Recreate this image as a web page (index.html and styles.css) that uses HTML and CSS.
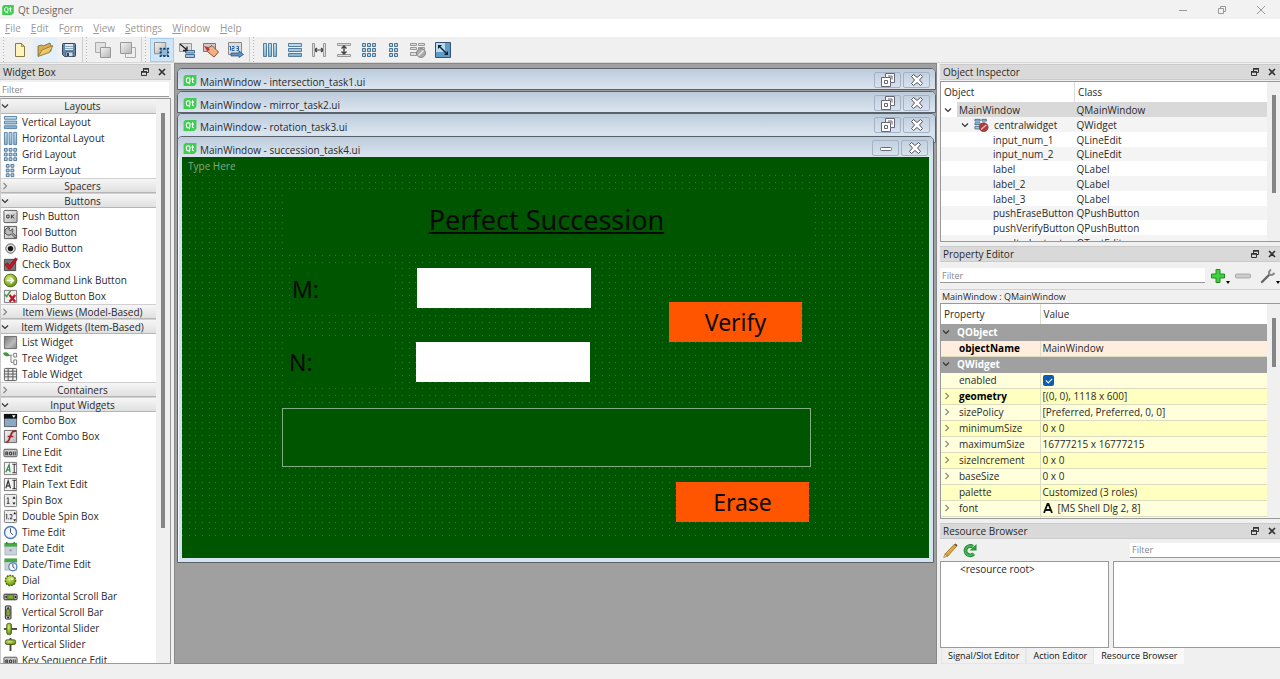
FILE: index.html
```
<!DOCTYPE html>
<html lang="en">
<head>
<meta charset="utf-8">
<title>Qt Designer</title>
<link rel="stylesheet" href="styles.css">
</head>
<body>
<svg class="sprite" aria-hidden="true">
  <defs>
    <linearGradient id="gBlue" x1="0" y1="0" x2="0" y2="1"><stop offset="0" stop-color="#c3dff0"/><stop offset="1" stop-color="#7fb2d3"/></linearGradient>
    <linearGradient id="gGrey" x1="0" y1="0" x2="1" y2="1"><stop offset="0" stop-color="#f4f4f4"/><stop offset="1" stop-color="#b4b4b4"/></linearGradient>
    <linearGradient id="gDark" x1="0" y1="0" x2="1" y2="1"><stop offset="0" stop-color="#777"/><stop offset=".6" stop-color="#bbb"/><stop offset="1" stop-color="#888"/></linearGradient>
    <radialGradient id="gLime" cx=".4" cy=".35" r=".7"><stop offset="0" stop-color="#d9f06a"/><stop offset="1" stop-color="#5c8a10"/></radialGradient>
    <linearGradient id="gGold" x1="0" y1="0" x2="1" y2="1"><stop offset="0" stop-color="#fbe9a0"/><stop offset="1" stop-color="#d9a93a"/></linearGradient>
    <pattern id="dots" width="20" height="20" patternUnits="userSpaceOnUse">
      <path fill="#2f7d2f" d="M0 0h1v1h-1zM7 0h1v1h-1zM13 0h1v1h-1zM0 7h1v1h-1zM7 7h1v1h-1zM13 7h1v1h-1zM0 13h1v1h-1zM7 13h1v1h-1zM13 13h1v1h-1z"/>
    </pattern>
  </defs>
  <symbol id="qt" viewBox="0 0 14 12"><path fill="#41cd52" d="M2 0h12v9.500l-2.500 2.500H0V2z"/><path fill="none" stroke="#fff" stroke-width="1.200" d="M5 3c-2 0-2 1-2 2.700S3 8.500 5 8.500s2-1 2-2.800S7 3 5 3zM5.500 8l1.200 2M9.800 2.500v5q0 1 1.400 1M8.600 4.500h2.700"/></symbol>
  <symbol id="float" viewBox="0 0 8 8"><path fill="none" stroke="#333" d="M2.500 3V.5h5v4H6M.5 3.500h5v4h-5z"/><path stroke="#333" stroke-width="1.500" d="M2 1h6M0 4h6"/></symbol>
  <symbol id="close" viewBox="0 0 8 8"><path stroke="#333" stroke-width="1.700" d="M1 1l6 6M7 1L1 7"/></symbol>
  <symbol id="down" viewBox="0 0 8 8"><path fill="none" stroke="#333" stroke-width="1.200" d="M1 2.500l3 3 3-3"/></symbol>
  <symbol id="right" viewBox="0 0 8 8"><path fill="none" stroke="#888" stroke-width="1.200" d="M2.500 1l3 3-3 3"/></symbol>
  <symbol id="new" viewBox="0 0 16 16"><path fill="#fdf3bd" stroke="#8a7a3d" d="M3.500 1.500h6l3 3v10h-9z"/><path fill="#e0c86a" stroke="#8a7a3d" stroke-width=".7" d="M9.500 1.500v3h3z"/></symbol>
  <symbol id="open" viewBox="0 0 16 16"><path fill="#d8ad4f" stroke="#7a6232" stroke-width=".8" d="M1 14V4l4-1 1 1 7-3 1 3v5z"/><path fill="url(#gGold)" stroke="#8a6d2c" stroke-width=".8" d="M1 14.500L5 8l11-4.500-3.500 7z"/></symbol>
  <symbol id="save" viewBox="0 0 16 16"><path fill="#6387ab" stroke="#32465c" d="M1.500 2.500q0-1 1-1h11q1 0 1 1v11q0 1-1 1h-10l-2-2z"/><path fill="#dfe8f1" d="M4 2h8v6H4z"/><path fill="#8ea8c0" d="M4 4h8v1H4zM4 6h8v1H4z"/><path fill="#d6dde4" stroke="#32465c" stroke-width=".7" d="M5 10h7v4.500H5z"/><path fill="#32465c" d="M6 11h2v3H6z"/></symbol>
  <symbol id="back" viewBox="0 0 16 16"><path fill="#e2e2e2" stroke="#aaa" d="M.5.5h10v10H.5z"/><path fill="url(#gGrey)" stroke="#999" d="M5.500 5.500h10v10h-10z"/></symbol>
  <symbol id="front" viewBox="0 0 16 16"><path fill="#eee" stroke="#aaa" d="M5.500 5.500h10v10h-10z"/><path fill="url(#gGrey)" stroke="#999" d="M.5.500h11v11H.5z"/></symbol>
  <symbol id="edit" viewBox="0 0 17 17"><path fill="url(#gGrey)" stroke="#888" d="M.5.500h12v12H.5z"/><path fill="#92b8d8" d="M7 7h8v8H7z"/><path fill="none" stroke="#1d4b7d" stroke-dasharray="1 1" d="M7.500 7.500h7v7h-7z"/><path fill="#12365f" d="M6 6h2v2H6zM14 6h2v2h-2zM6 14h2v2H6zM14 14h2v2h-2zM10 6h2v2h-2zM10 14h2v2h-2zM6 10h2v2H6zM14 10h2v2h-2z"/></symbol>
  <symbol id="signal" viewBox="0 0 16 16"><path fill="#ddd" stroke="#999" d="M.5 1.500h12v8H.5z"/><path fill="#a5c5e3" stroke="#456b93" d="M6.500 8.500h9v2.500h-9zM6.500 12.500h9v3h-9z"/><path stroke="#222" stroke-width="1.300" fill="none" d="M1 2l7 6M8 4.500V8.500H4"/></symbol>
  <symbol id="buddy" viewBox="0 0 16 16"><path fill="#ccc" stroke="#777" d="M.5 1.500h12v8H.5z"/><path fill="#f0b287" stroke="#8d4d2c" d="M5 6l4-2.500 6.500 6.500-4.500 5-6.500-5.500z"/><path fill="#c33" d="M1 4l4 1 2 3-3 1z"/></symbol>
  <symbol id="tab" viewBox="0 0 16 16"><path fill="#ddd" stroke="#888" d="M.5.500h13v12H.5z"/><path fill="none" stroke="#2b64a5" d="M1.500 5l1-1v4.500M4 4.500h2v2h-2v2h2.500M8.500 4.500h2v4h-2M8.500 6.500h2"/><path fill="#5c91ca" stroke="#1d4b7d" stroke-width=".7" d="M3 11h8V9l4.500 3.500-4.500 3V14H3z"/></symbol>
  <symbol id="lh" viewBox="0 0 16 16"><path fill="url(#gBlue)" stroke="#567f9f" d="M1.500 1.500h3v13h-3zM6.500 1.500h3v13h-3zM11.500 1.500h3v13h-3z"/></symbol>
  <symbol id="lv" viewBox="0 0 16 16"><path fill="url(#gBlue)" stroke="#567f9f" d="M1.500 1.500h13v3h-13zM1.500 6.500h13v3h-13zM1.500 11.500h13v3h-13z"/></symbol>
  <symbol id="sh" viewBox="0 0 16 16"><path fill="#ddd" stroke="#999" d="M1.500 1.500h2v5H5v3H3.500v5h-2zM14.500 1.500h-2v5H11v3h1.500v5h2z"/><path stroke="#444" stroke-width="1.200" fill="none" d="M4 8h8M6 6L4 8l2 2M10 6l2 2-2 2"/></symbol>
  <symbol id="sv" viewBox="0 0 16 16"><path fill="#ddd" stroke="#999" d="M1.500 1.500h13v2h-13zM1.500 12.500h13v2h-13z"/><path stroke="#444" stroke-width="1.400" fill="none" d="M8 4v8M5.500 6.500L8 4l2.500 2.500M5.500 9.500L8 12l2.500-2.500"/></symbol>
  <symbol id="grid" viewBox="0 0 16 16"><path fill="#b4d6ec" stroke="#4b7294" d="M1.500 1.500h3v3h-3zM6.500 1.500h3v3h-3zM11.500 1.500h3v3h-3zM1.500 6.500h3v3h-3zM6.500 6.500h3v3h-3zM11.500 6.500h3v3h-3zM1.500 11.500h3v3h-3zM6.500 11.500h3v3h-3zM11.500 11.500h3v3h-3z"/></symbol>
  <symbol id="form" viewBox="0 0 16 16"><path fill="#b4d6ec" stroke="#4b7294" d="M3.500 1.500h3v3h-3zM8.500 1.500h3v3h-3zM3.500 6.500h3v3h-3zM8.500 6.500h3v3h-3zM3.500 11.500h3v3h-3zM8.500 11.500h3v3h-3z"/></symbol>
  <symbol id="break" viewBox="0 0 16 16"><path fill="#ddd" stroke="#999" d="M.5 1.500h6v2h-6zM8.500 1.500h6v2h-6zM.5 5.500h6v2h-6zM8.500 5.500h6v2h-6zM.5 10.500h6v3h-6z"/><circle cx="11" cy="11" r="4.500" fill="#aaa" stroke="#888"/><path stroke="#eee" stroke-width="1.500" d="M8.500 13.500l5-5"/></symbol>
  <symbol id="breakred" viewBox="0 0 16 16"><path fill="#a9cde6" stroke="#41688b" d="M.5 1.500h6v2h-6zM8.500 1.500h5v2h-5zM.5 5.500h6v2h-6zM.5 9.500h6v3h-6z"/><circle cx="10.500" cy="10.500" r="5" fill="#b23a3a" stroke="#7f4040"/><path stroke="#e6b5b5" stroke-width="1.500" d="M7.500 13l6-5"/></symbol>
  <symbol id="adjust" viewBox="0 0 16 16"><path fill="#5f9cc8" stroke="#35536e" d="M.5.500h15v15H.5z"/><path fill="#b9dcf0" d="M1 1h9v9H1z"/><path stroke="#123" stroke-width="1.400" d="M4 4l7 7"/><path fill="#123" d="M3 3h4L3 7zM13 13H9l4-4z"/></symbol>
  <symbol id="push" viewBox="0 0 16 16"><rect x="1" y="1.500" width="14" height="13" rx="1" fill="url(#gGrey)" stroke="#555"/><path fill="none" stroke="#333" d="M4 6.500h2.500v3H4zM9 6v4M12 6L9.500 8 12 10"/></symbol>
  <symbol id="tool" viewBox="0 0 16 16"><path fill="url(#gGrey)" stroke="#555" d="M1.500 1.500h13v13h-13z"/><path fill="#bbb" stroke="#444" d="M7 3a4 4 0 1 0 2 6.500l4 4.500 1.500-1.500L10 8a4 4 0 0 0 0-4L8 6.500 6.500 5z"/></symbol>
  <symbol id="radio" viewBox="0 0 16 16"><circle cx="8" cy="8" r="5" fill="#ddd" stroke="#555"/><circle cx="8" cy="8" r="2.800" fill="#111"/></symbol>
  <symbol id="check" viewBox="0 0 16 16"><path fill="#777" stroke="#444" d="M1.500 2.500h12v12h-12z"/><path fill="#c5152b" stroke="#7d0c18" stroke-width=".6" d="M2 8l3-2 2 3 6-8 2.500 1L8 13H6z"/></symbol>
  <symbol id="command" viewBox="0 0 16 16"><circle cx="8" cy="8" r="6.800" fill="url(#gLime)" stroke="#4e6b10"/><path fill="none" stroke="#fff" stroke-width="1.600" d="M4 8h7M8 5l3 3-3 3"/></symbol>
  <symbol id="dialog" viewBox="0 0 16 16"><path fill="#eee" stroke="#777" d="M1.500 1.500h13v13h-13z"/><path fill="none" stroke="#41a53a" stroke-width="1.800" d="M2 6l2 2 4-6"/><path stroke="#c8142a" stroke-width="2.500" d="M7 6.500l6 7M13 6.500l-6 7"/></symbol>
  <symbol id="list" viewBox="0 0 16 16"><path fill="url(#gDark)" stroke="#666" d="M1.500 1.500h13v13h-13z"/></symbol>
  <symbol id="tree" viewBox="0 0 16 16"><path fill="#3f9a35" d="M0 2q5-2 7 3Q2 7 0 2z"/><path fill="none" stroke="#777" d="M6 4.500h4M8.500 5v7H11M11.500 2.500h3v4h-3zM11.500 9.500h3v5h-3z"/></symbol>
  <symbol id="table" viewBox="0 0 16 16"><rect x="1.500" y="1.500" width="13" height="13" rx="1" fill="#eee" stroke="#555"/><path stroke="#555" d="M2 4.500h12M2 7.500h12M2 10.500h12M5.500 2v12M10.500 2v12"/></symbol>
  <symbol id="combo" viewBox="0 0 16 16"><path fill="#89a9c6" stroke="#555" d="M1.500 1.500h13v13h-13z"/><path fill="#111" d="M1 1h14v5H1z"/><path fill="#fff" d="M9.500 2.500h4L11.500 5z"/></symbol>
  <symbol id="fontcombo" viewBox="0 0 16 16"><path fill="url(#gGrey)" stroke="#666" d="M1.500 1.500h13v13h-13z"/><path fill="none" stroke="#a3202c" stroke-width="1.800" d="M3 14q3 0 4-4l2-5q1-3 5-3M5 8h6"/></symbol>
  <symbol id="line" viewBox="0 0 16 16"><rect x="1" y="4.500" width="14" height="8" rx="1" fill="#ccc" stroke="#555"/><path fill="none" stroke="#333" d="M3 11V7.500h2V11M3 9.500h2M7 7.500h2v3H7zM11 7v4M13 7v4"/></symbol>
  <symbol id="text" viewBox="0 0 16 16"><path fill="#f3f3f3" stroke="#777" d="M1.500 1.500h13v13h-13z"/><path fill="none" stroke="#2f8a4a" stroke-width="1.300" d="M3 12l3.500-8 1 8M4 9.500h3.500"/><path stroke="#333" d="M10 3.500h4M12 3.500v9M10 12.500h4"/></symbol>
  <symbol id="plain" viewBox="0 0 16 16"><path fill="#f3f3f3" stroke="#777" d="M1.500 1.500h13v13h-13z"/><path fill="none" stroke="#333" stroke-width="1.200" d="M3 12l2.500-8L8 12M4 9.500h3.500M10 3.500h4M12 3.500v9M10 12.500h4"/></symbol>
  <symbol id="spin" viewBox="0 0 16 16"><rect x="1.500" y="1.500" width="13" height="13" rx="1" fill="#eee" stroke="#777"/><path fill="none" stroke="#333" d="M4 6l1.500-1v6M4 11h3"/><path fill="#222" d="M10 6l1.700-2.500L13.500 6zM10 10h3.500l-1.800 2.500z"/></symbol>
  <symbol id="dspin" viewBox="0 0 16 16"><rect x="1.500" y="1.500" width="13" height="13" rx="1" fill="#eee" stroke="#777"/><path fill="none" stroke="#333" d="M3 6l1-.5V11M5.500 10.500h1M7 6h2.500v2L7.500 10.500H10"/><path fill="#222" d="M11 5.500L12.500 3 14 5.500zM11 11h3l-1.500 2.500z"/></symbol>
  <symbol id="time" viewBox="0 0 16 16"><circle cx="8" cy="8" r="6.400" fill="#f4f8fd" stroke="#4a7ab5" stroke-width="1.500"/><path fill="none" stroke="#345" d="M8 3.500V8l2.500 2.500"/></symbol>
  <symbol id="date" viewBox="0 0 16 16"><path fill="#c9d2da" stroke="#9aa" stroke-width=".7" d="M2 4h12.500v11H2z"/><path fill="#45a845" d="M1.500 2h13.500v4H1.500z"/><path stroke="#2a7b2a" stroke-width="1.500" d="M4 1v2M12 1v2"/><path fill="#7890ad" d="M7 9h2v2H7z"/></symbol>
  <symbol id="datetime" viewBox="0 0 16 16"><path fill="#c9d2da" stroke="#9aa" stroke-width=".7" d="M2 4h12.500v10H2z"/><path fill="#45a845" d="M1.500 1.500h13.500v4H1.500z"/><circle cx="10.500" cy="10.500" r="4.300" fill="#f4f8fd" stroke="#4a7ab5" stroke-width="1.200"/><path fill="none" stroke="#345" d="M10.500 7.500v3l2 1.500"/></symbol>
  <symbol id="dial" viewBox="0 0 16 16"><circle cx="8" cy="8" r="5.500" fill="url(#gLime)" stroke="#4e6b10" stroke-dasharray="2 1" stroke-width="1.500"/><circle cx="10" cy="6" r="1.300" fill="#f3ffb0"/></symbol>
  <symbol id="hscroll" viewBox="0 0 16 16"><rect x="1" y="5.500" width="14" height="6" rx="1" fill="#bbb" stroke="#222"/><path fill="#7fae22" stroke="#333" stroke-width=".6" d="M5 6h6.500v5H5z"/><path fill="#111" d="M4 7v3L2 8.500zM12.500 7v3l2-1.500z"/></symbol>
  <symbol id="vscroll" viewBox="0 0 16 16"><rect x="2.500" y="1" width="6" height="14" rx="1" fill="#bbb" stroke="#222"/><path fill="#7fae22" stroke="#333" stroke-width=".6" d="M3.500 5h4v6.500h-4z"/><path fill="#111" d="M4 4h3L5.500 2zM4 12.500h3l-1.500 2z"/></symbol>
  <symbol id="hslider" viewBox="0 0 16 16"><path stroke="#444" stroke-width="2" d="M1 8.500h14"/><rect x="4" y="2.500" width="5" height="12" rx="2" fill="url(#gLime)" stroke="#4e5b20"/></symbol>
  <symbol id="vslider" viewBox="0 0 16 16"><path stroke="#444" stroke-width="2" d="M8 1v14"/><rect x="2.500" y="3" width="11" height="5" rx="2" fill="url(#gLime)" stroke="#4e5b20"/></symbol>
  <symbol id="plus" viewBox="0 0 16 16"><path fill="#43cf43" stroke="#1e8f1e" d="M6 1.500h4V6h4.500v4H10v4.500H6V10H1.500V6H6z"/></symbol>
  <symbol id="minus" viewBox="0 0 16 16"><rect x=".5" y="6" width="15" height="4" rx="1" fill="#ccc" stroke="#aaa"/></symbol>
  <symbol id="wrench" viewBox="0 0 16 16"><path fill="none" stroke="#666" stroke-width="2.400" stroke-linecap="round" d="M2 14l7-7"/><path fill="none" stroke="#888" stroke-width="2" d="M11 1.500Q8 4 9.500 6.500 12 8 14.500 5"/></symbol>
  <symbol id="drop" viewBox="0 0 4 3"><path d="M0 0h4L2 3z"/></symbol>
  <symbol id="pencil" viewBox="0 0 16 16"><path fill="#e5a93a" stroke="#8a6420" stroke-width=".8" d="M2 12L12 1.500l2.500 2L5 14z"/><path fill="#5c564c" d="M12 1.500L13.500.500l2 2-1 1z"/><path fill="#f2dcb0" stroke="#8a6420" stroke-width=".6" d="M2 12l-1.300 3.500L5 14z"/></symbol>
  <symbol id="reload" viewBox="0 0 16 16"><path fill="none" stroke="#1e7f2c" stroke-width="4" d="M12.500 11.500A5 5 0 1 1 11.500 4"/><path fill="none" stroke="#46b652" stroke-width="2.200" d="M12.500 11.500A5 5 0 1 1 11.500 4"/><path fill="#2d983b" d="M8 8h7.500V1z"/></symbol>
  <symbol id="fonta" viewBox="0 0 10 10"><path fill="none" stroke="#111" stroke-width="1.800" d="M1 10L4.500 1h1L9 10M2.500 7h5"/></symbol>
  <symbol id="mrestore" viewBox="0 0 14 14"><path fill="#fff" stroke="#667" d="M4.500.500h9v9h-4v4h-9v-9h4z"/><path fill="none" stroke="#667" d="M4.500 4.500h5v5M3.500 7.500h3v3h-3zM7 3h4v3.500"/></symbol>
  <symbol id="mclose" viewBox="0 0 14 14"><path fill="#fff" stroke="#556" d="M3.500 1.500L7 4.500l3.500-3 2 2L9.500 7l3 3.500-2 2L7 9.500l-3.500 3-2-2L4.500 7l-3-3.500z"/></symbol>
  <symbol id="mmin" viewBox="0 0 14 14"><rect x="1.500" y="6.500" width="11" height="3" rx="1" fill="#fff" stroke="#667"/></symbol>
</svg>

<header class="titlebar">
  <svg class="app-icon"><use href="#qt"/></svg>
  <span class="app-title">Qt Designer</span>
  <div class="win-buttons">
    <button aria-label="Minimize"><svg viewBox="0 0 10 10"><path stroke="#999" d="M1 5.500h8"/></svg></button>
    <button aria-label="Restore"><svg viewBox="0 0 10 10"><path fill="none" stroke="#999" d="M1.500 3.500h5v5h-5zM3.500 3V1.500h5v5H7"/></svg></button>
    <button aria-label="Close"><svg viewBox="0 0 10 10"><path stroke="#999" d="M1 1l8 8M9 1L1 9"/></svg></button>
  </div>
</header>
<nav class="menubar">
  <button><u>F</u>ile</button><button><u>E</u>dit</button><button>F<u>o</u>rm</button><button><u>V</u>iew</button><button><u>S</u>ettings</button><button><u>W</u>indow</button><button><u>H</u>elp</button>
</nav>
<div class="toolbar">
  <div class="tools tools-file">
    <button aria-label="New"><svg><use href="#new"/></svg></button>
    <button class="hover" aria-label="Open"><svg><use href="#open"/></svg></button>
    <button aria-label="Save"><svg><use href="#save"/></svg></button>
  </div>
  <div class="tools tools-order">
    <button aria-label="Send to back"><svg><use href="#back"/></svg></button>
    <button aria-label="Bring to front"><svg><use href="#front"/></svg></button>
  </div>
  <div class="tools tools-mode">
    <button class="active" aria-label="Edit widgets"><svg><use href="#edit"/></svg></button>
    <button aria-label="Edit signals and slots"><svg><use href="#signal"/></svg></button>
    <button aria-label="Edit buddies"><svg><use href="#buddy"/></svg></button>
    <button aria-label="Edit tab order"><svg><use href="#tab"/></svg></button>
  </div>
  <div class="tools tools-layout">
    <button aria-label="Lay out horizontally"><svg><use href="#lh"/></svg></button>
    <button aria-label="Lay out vertically"><svg><use href="#lv"/></svg></button>
    <button aria-label="Horizontal splitter"><svg><use href="#sh"/></svg></button>
    <button aria-label="Vertical splitter"><svg><use href="#sv"/></svg></button>
    <button aria-label="Lay out in a grid"><svg><use href="#grid"/></svg></button>
    <button aria-label="Lay out in a form"><svg><use href="#form"/></svg></button>
    <button aria-label="Break layout"><svg><use href="#break"/></svg></button>
    <button aria-label="Adjust size"><svg><use href="#adjust"/></svg></button>
  </div>
</div>

<main class="workspace">
  <aside class="dock widget-box">
    <div class="dock-title"><h2>Widget Box</h2><button aria-label="Float"><svg><use href="#float"/></svg></button><button aria-label="Close"><svg><use href="#close"/></svg></button></div>
    <input class="filter" type="text" placeholder="Filter" aria-label="Filter widgets">
    <div class="scroll-frame">
      <div class="widget-list">
        <button class="category"><svg><use href="#down"/></svg><span>Layouts</span></button>
        <ul>
          <li><svg><use href="#lv"/></svg>Vertical Layout</li>
          <li><svg><use href="#lh"/></svg>Horizontal Layout</li>
          <li><svg><use href="#grid"/></svg>Grid Layout</li>
          <li><svg><use href="#form"/></svg>Form Layout</li>
        </ul>
        <button class="category"><svg><use href="#right"/></svg><span>Spacers</span></button>
        <button class="category"><svg><use href="#down"/></svg><span>Buttons</span></button>
        <ul>
          <li><svg><use href="#push"/></svg>Push Button</li>
          <li><svg><use href="#tool"/></svg>Tool Button</li>
          <li><svg><use href="#radio"/></svg>Radio Button</li>
          <li><svg><use href="#check"/></svg>Check Box</li>
          <li><svg><use href="#command"/></svg>Command Link Button</li>
          <li><svg><use href="#dialog"/></svg>Dialog Button Box</li>
        </ul>
        <button class="category"><svg><use href="#right"/></svg><span>Item Views (Model-Based)</span></button>
        <button class="category"><svg><use href="#down"/></svg><span>Item Widgets (Item-Based)</span></button>
        <ul>
          <li><svg><use href="#list"/></svg>List Widget</li>
          <li><svg><use href="#tree"/></svg>Tree Widget</li>
          <li><svg><use href="#table"/></svg>Table Widget</li>
        </ul>
        <button class="category"><svg><use href="#right"/></svg><span>Containers</span></button>
        <button class="category"><svg><use href="#down"/></svg><span>Input Widgets</span></button>
        <ul>
          <li><svg><use href="#combo"/></svg>Combo Box</li>
          <li><svg><use href="#fontcombo"/></svg>Font Combo Box</li>
          <li><svg><use href="#line"/></svg>Line Edit</li>
          <li><svg><use href="#text"/></svg>Text Edit</li>
          <li><svg><use href="#plain"/></svg>Plain Text Edit</li>
          <li><svg><use href="#spin"/></svg>Spin Box</li>
          <li><svg><use href="#dspin"/></svg>Double Spin Box</li>
          <li><svg><use href="#time"/></svg>Time Edit</li>
          <li><svg><use href="#date"/></svg>Date Edit</li>
          <li><svg><use href="#datetime"/></svg>Date/Time Edit</li>
          <li><svg><use href="#dial"/></svg>Dial</li>
          <li><svg><use href="#hscroll"/></svg>Horizontal Scroll Bar</li>
          <li><svg><use href="#vscroll"/></svg>Vertical Scroll Bar</li>
          <li><svg><use href="#hslider"/></svg>Horizontal Slider</li>
          <li><svg><use href="#vslider"/></svg>Vertical Slider</li>
          <li><svg><use href="#line"/></svg>Key Sequence Edit</li>
        </ul>
      </div>
      <div class="scrollbar"><span class="thumb thumb-widgets"></span></div>
    </div>
  </aside>

  <section class="mdi">
    <article class="subwindow sub1">
      <header class="sub-title"><svg class="sub-icon"><use href="#qt"/></svg><h3>MainWindow - intersection_task1.ui</h3><button aria-label="Restore"><svg><use href="#mrestore"/></svg></button><button aria-label="Close"><svg><use href="#mclose"/></svg></button></header>
    </article>
    <article class="subwindow sub2">
      <header class="sub-title"><svg class="sub-icon"><use href="#qt"/></svg><h3>MainWindow - mirror_task2.ui</h3><button aria-label="Restore"><svg><use href="#mrestore"/></svg></button><button aria-label="Close"><svg><use href="#mclose"/></svg></button></header>
    </article>
    <article class="subwindow sub3">
      <header class="sub-title"><svg class="sub-icon"><use href="#qt"/></svg><h3>MainWindow - rotation_task3.ui</h3><button aria-label="Restore"><svg><use href="#mrestore"/></svg></button><button aria-label="Close"><svg><use href="#mclose"/></svg></button></header>
    </article>
    <article class="subwindow sub4">
      <header class="sub-title"><svg class="sub-icon"><use href="#qt"/></svg><h3>MainWindow - succession_task4.ui</h3><button aria-label="Minimize"><svg><use href="#mmin"/></svg></button><button aria-label="Close"><svg><use href="#mclose"/></svg></button></header>
      <div class="form">
        <div class="form-menu">Type Here</div>
        <svg class="form-grid" aria-hidden="true"><rect width="100%" height="100%" fill="url(#dots)"/></svg>
        <h1 class="item form-title">Perfect Succession</h1>
        <label class="item label-m" for="input_num_1">M:</label>
        <input class="item num num-m" id="input_num_1" type="text">
        <label class="item label-n" for="input_num_2">N:</label>
        <input class="item num num-n" id="input_num_2" type="text">
        <button class="item push verify">Verify</button>
        <textarea class="item result" aria-label="Result"></textarea>
        <button class="item push erase">Erase</button>
      </div>
    </article>
  </section>

  <aside class="right">
    <section class="dock inspector">
      <div class="dock-title"><h2>Object Inspector</h2><button aria-label="Float"><svg><use href="#float"/></svg></button><button aria-label="Close"><svg><use href="#close"/></svg></button></div>
      <div class="scroll-frame">
        <table class="objects">
          <colgroup><col class="col-object"><col></colgroup>
          <thead><tr><th>Object</th><th>Class</th></tr></thead>
          <tbody>
            <tr class="selected"><td><div class="node"><svg><use href="#down"/></svg>MainWindow</div></td><td>QMainWindow</td></tr>
            <tr><td><div class="node child"><svg><use href="#down"/></svg><svg class="node-icon"><use href="#breakred"/></svg>centralwidget</div></td><td>QWidget</td></tr>
            <tr><td class="leaf">input_num_1</td><td>QLineEdit</td></tr>
            <tr><td class="leaf">input_num_2</td><td>QLineEdit</td></tr>
            <tr><td class="leaf">label</td><td>QLabel</td></tr>
            <tr><td class="leaf">label_2</td><td>QLabel</td></tr>
            <tr><td class="leaf">label_3</td><td>QLabel</td></tr>
            <tr><td class="leaf">pushEraseButton</td><td>QPushButton</td></tr>
            <tr><td class="leaf">pushVerifyButton</td><td>QPushButton</td></tr>
            <tr><td class="leaf">resultadoutput</td><td>QTextEdit</td></tr>
          </tbody>
        </table>
        <div class="scrollbar"><span class="thumb thumb-objects"></span></div>
      </div>
    </section>

    <section class="dock properties">
      <div class="dock-title"><h2>Property Editor</h2><button aria-label="Float"><svg><use href="#float"/></svg></button><button aria-label="Close"><svg><use href="#close"/></svg></button></div>
      <div class="prop-tools">
        <input class="filter" type="text" placeholder="Filter" aria-label="Filter properties">
        <button aria-label="Add property"><svg><use href="#plus"/></svg><svg class="drop"><use href="#drop"/></svg></button>
        <button aria-label="Remove property"><svg><use href="#minus"/></svg></button>
        <button aria-label="Configure"><svg><use href="#wrench"/></svg><svg class="drop"><use href="#drop"/></svg></button>
      </div>
      <p class="object-path">MainWindow : QMainWindow</p>
      <div class="scroll-frame">
        <table class="props">
          <colgroup><col class="col-arrow"><col class="col-name"><col></colgroup>
          <thead><tr><th colspan="2">Property</th><th>Value</th></tr></thead>
          <tbody>
            <tr class="group"><td><svg><use href="#down"/></svg></td><td colspan="2">QObject</td></tr>
            <tr class="peach"><td></td><td class="bold">objectName</td><td>MainWindow</td></tr>
            <tr class="group"><td><svg><use href="#down"/></svg></td><td colspan="2">QWidget</td></tr>
            <tr class="light"><td></td><td><label for="enabled">enabled</label></td><td><input id="enabled" type="checkbox" checked></td></tr>
            <tr class="deep"><td><svg><use href="#right"/></svg></td><td class="bold">geometry</td><td>[(0, 0), 1118 x 600]</td></tr>
            <tr class="light"><td><svg><use href="#right"/></svg></td><td>sizePolicy</td><td>[Preferred, Preferred, 0, 0]</td></tr>
            <tr class="deep"><td><svg><use href="#right"/></svg></td><td>minimumSize</td><td>0 x 0</td></tr>
            <tr class="light"><td><svg><use href="#right"/></svg></td><td>maximumSize</td><td>16777215 x 16777215</td></tr>
            <tr class="deep"><td><svg><use href="#right"/></svg></td><td>sizeIncrement</td><td>0 x 0</td></tr>
            <tr class="light"><td><svg><use href="#right"/></svg></td><td>baseSize</td><td>0 x 0</td></tr>
            <tr class="deep"><td></td><td>palette</td><td>Customized (3 roles)</td></tr>
            <tr class="light"><td><svg><use href="#right"/></svg></td><td>font</td><td><div class="font-value"><svg><use href="#fonta"/></svg>[MS Shell Dlg 2, 8]</div></td></tr>
            <tr class="deep"><td></td><td></td><td></td></tr>
          </tbody>
        </table>
        <div class="scrollbar"><span class="thumb thumb-props"></span></div>
      </div>
    </section>

    <section class="dock resources">
      <div class="dock-title"><h2>Resource Browser</h2><button aria-label="Float"><svg><use href="#float"/></svg></button><button aria-label="Close"><svg><use href="#close"/></svg></button></div>
      <div class="res-tools">
        <button aria-label="Edit resources"><svg><use href="#pencil"/></svg></button>
        <button aria-label="Reload"><svg><use href="#reload"/></svg></button>
        <input class="filter" type="text" placeholder="Filter" aria-label="Filter resources">
      </div>
      <div class="res-views">
        <div class="res-tree">&lt;resource root&gt;</div>
        <div class="res-files"></div>
      </div>
      <div class="tabs">
        <button>Signal/Slot Editor</button><button>Action Editor</button><button class="current">Resource Browser</button>
      </div>
    </section>
  </aside>
</main>
<footer class="statusbar"></footer>
</body>
</html>
```
FILE: styles.css
```
* { box-sizing: border-box; }

body {
  margin: 0;
  height: 100vh;
  display: flex;
  flex-direction: column;
  overflow: hidden;
  background: #f0f0f0;
  color: #2a2a2a;
  font: 10px/14px "Open Sans", "Noto Sans", sans-serif;
}

button, input, textarea { font: inherit; color: inherit; }
button { border: 0; padding: 0; background: none; }
h1, h2, h3, p, ul { margin: 0; padding: 0; font-size: inherit; font-weight: normal; }
ul { list-style: none; }
svg { display: block; flex: none; }
table { border-collapse: collapse; table-layout: fixed; width: 100%; }
th, td { padding: 0; text-align: left; font-weight: normal; white-space: nowrap; overflow: hidden; }
.sprite { position: absolute; width: 0; height: 0; }

.titlebar {
  flex: none;
  display: flex;
  align-items: center;
  height: 19px;
  padding-left: 2px;
  background: #f2f2f2;
}
.app-icon { width: 12px; height: 10px; }
.app-title { margin-left: 4px; color: #666; }
.win-buttons { display: flex; margin-left: auto; }
.win-buttons button { display: grid; place-items: center; width: 39px; height: 18px; }
.win-buttons svg { width: 10px; height: 10px; }

.menubar {
  flex: none;
  display: flex;
  gap: 10px;
  height: 18px;
  padding-left: 5px;
  background: #fff;
}
.menubar button { color: #999; }

.toolbar {
  flex: none;
  display: flex;
  height: 26px;
  border-bottom: 1px solid #d8d8d8;
}
.tools {
  display: flex;
  justify-content: space-between;
  padding: 1px 1px 0 8px;
  border-right: 1px solid #d0d0d0;
  background: radial-gradient(circle, #b5b5b5 1px, transparent 1px) 2px 2px / 3px 3px repeat-y;
}
.tools-file { width: 83px; }
.tools-order { width: 59px; }
.tools-mode { width: 108px; }
.tools-layout { width: 206px; border: 0; }
.tools button { display: grid; place-items: center; width: 24px; height: 24px; }
.tools svg { width: 16px; height: 16px; }
.tools .hover { background: #e3f0fa; }
.tools .active { background: #cfe6f8; border: 1px solid #a5cdec; }

.workspace { flex: 1; display: flex; min-height: 0; }
.statusbar { flex: none; height: 15px; }

.dock { display: flex; flex-direction: column; min-height: 0; }
.dock-title {
  flex: none;
  display: flex;
  align-items: center;
  height: 16px;
  padding-left: 3px;
  background: #d9d9d9;
  border: 1px solid #cbcbcb;
  border-width: 1px 0;
}
.dock-title h2 { flex: 1; }
.dock-title button { width: 17px; display: grid; place-items: center; }
.dock-title svg { width: 8px; height: 8px; }
.filter {
  height: 15px;
  min-width: 0;
  padding: 0 2px;
  border: 0;
  border-bottom: 1px solid #999;
  background: #fff;
  font-size: 9px;
}
.filter::placeholder { color: #888; opacity: 1; }
.scroll-frame {
  flex: 1;
  display: flex;
  min-height: 0;
  overflow: hidden;
  background: #fff;
  border: 1px solid #999;
}
.scrollbar { flex: none; width: 14px; background: #f0f0f0; }
.thumb { display: block; width: 4px; margin-left: 5px; background: #868686; }
.thumb-widgets { height: 415px; margin-top: 14px; }
.thumb-objects { height: 98px; margin-top: 13px; }
.thumb-props { height: 49px; margin-top: 14px; }

.widget-box { width: 171px; padding-top: 1px; }
.widget-box .dock-title { padding-right: 1px; }
.widget-box .filter { margin: 2px 2px 1px 0; }
.widget-box .scroll-frame { border-left-color: #ccc; }
.widget-list { flex: 1; min-width: 0; }
.category {
  display: flex;
  align-items: center;
  width: 100%;
  height: 15px;
  background: linear-gradient(#f6f6f6, #e0e0e0);
  border-bottom: 1px solid #b5b5b5;
}
.category + .category, ul + .category { border-top: 1px solid #d0d0d0; }
.category svg { width: 8px; height: 8px; }
.category span { flex: 1; }
.widget-list li { display: flex; align-items: center; gap: 4px; height: 16px; padding-left: 2px; white-space: nowrap; }
.widget-list li svg { width: 15px; height: 15px; }

.mdi {
  flex: 1;
  position: relative;
  margin-left: 3px;
  overflow: hidden;
  background: #a0a0a0;
  border: 1px solid #888;
}
.subwindow {
  position: absolute;
  left: 2px;
  right: 0;
  padding: 0 4px 4px;
  background: #d5e2ef;
  border: 1px solid #5b6168;
  border-radius: 5px 5px 0 0;
}
.sub1 { top: 4px; height: 22px; }
.sub2 { top: 27px; height: 22px; }
.sub3 { top: 49px; height: 30px; }
.sub4 { top: 72px; right: 2px; height: 427px; box-shadow: inset 1px 0 #f2f7fc; }
.sub-title {
  display: flex;
  align-items: center;
  height: 20px;
  margin: 0 -4px;
  padding: 2px 5px 0 5px;
  border-radius: 4px 4px 0 0;
  background: linear-gradient(#bccbdb, #dbe5f0);
}
.sub-icon { width: 14px; height: 11px; }
.sub-title h3 { flex: 1; margin: 4px 0 0 3px; }
.sub-title button {
  display: grid;
  place-items: center;
  width: 27px;
  height: 16px;
  margin-left: 2px;
  border: 1px solid #a3b2c4;
  border-radius: 2px;
}
.sub-title button svg { width: 14px; height: 14px; }

.form { position: relative; height: 401px; overflow: hidden; background: #005500; color: #0a0a0a; }
.form-menu { height: 18px; padding: 2px 6px; color: #86a886; }
.form-grid { width: 100%; height: 362px; }
.item { position: absolute; margin: 0; border: 0; border-radius: 0; font-family: "Noto Sans", sans-serif; }
.form-title, .label-m, .label-n { display: flex; align-items: center; background: #005500; font-size: 23px; line-height: 32px; }
.form-title { left: 101px; top: 33px; width: 527px; height: 60px; justify-content: center; font-size: 27px; text-decoration: underline; }
.label-m { left: 110px; top: 107px; width: 101px; height: 50px; }
.label-n { left: 107px; top: 181px; width: 104px; height: 48px; }
.num { width: 174px; height: 40px; background: #fff; }
.num-m { left: 235px; top: 111px; }
.num-n { left: 234px; top: 185px; }
.push { width: 133px; height: 40px; background: #ff5500; font-size: 23px; line-height: 32px; }
.verify { left: 487px; top: 145px; }
.erase { left: 494px; top: 325px; }
.result { left: 100px; top: 251px; width: 529px; height: 59px; background: #005500; border: 1px solid #83ad83; resize: none; }

.right { flex: none; display: flex; flex-direction: column; width: 343px; padding: 1px 0 0 3px; }
.right .scroll-frame { border-right: 0; }
.right .scrollbar { width: 13px; }
.inspector { height: 178px; }
.inspector .scroll-frame { margin-top: 1px; }
.objects { flex: 1; width: auto; align-self: flex-start; }
.objects .col-object { width: 128px; }
.objects thead th { height: 20px; padding-left: 3px; }
.objects th + th { border-left: 1px solid #ddd; }
.objects td { height: 15px; padding: 0 0 0 2px; line-height: 14px; }
.objects tr:nth-child(4n) td { height: 14px; }
.objects td:first-child { padding-left: 3px; }
.objects tbody tr:nth-child(even) { background: #f4f4f4; }
.objects .selected { background: linear-gradient(to right, #fff 16px, #d9d9d9 16px); }
.node { display: flex; align-items: center; height: 15px; gap: 7px; }
.node svg { width: 8px; height: 8px; }
.node.child { gap: 5px; padding-left: 17px; }
.node .node-icon { width: 15px; height: 14px; }
.objects td.leaf { padding-left: 52px; }

.properties { height: 273px; margin-top: 4px; }
.prop-tools { display: flex; align-items: center; height: 27px; }
.prop-tools .filter { flex: 1; }
.prop-tools button { display: flex; align-items: flex-end; width: 25px; padding-left: 5px; }
.prop-tools button svg { width: 16px; height: 16px; }
.prop-tools button .drop { width: 4px; height: 3px; }
.object-path { height: 14px; padding-left: 2px; border-top: 1px solid #d0d0d0; font-size: 9px; line-height: 13px; }
.props { flex: 1; width: auto; align-self: flex-start; }
.col-arrow { width: 15px; }
.col-name { width: 84px; }
.props th { height: 20px; padding-left: 3px; }
.props td { height: 16px; padding-left: 2px; line-height: 14px; border-bottom: 1px solid #dcdcc0; }
.props td + td { padding-left: 3px; }
.props th:last-child, .props td + td + td { border-left: 1px solid #dcdcc8; }
.props td + td + td { padding-left: 2px; }
.props td > svg { width: 8px; height: 8px; }
.props .group { background: #a0a0a0; color: #fff; }
.props .group td { padding-left: 1px; border-color: #a0a0a0; font-weight: bold; }
.props .peach { background: #ffeedd; }
.props .light { background: #ffffdc; }
.props .deep { background: #ffffbf; }
.props .bold { color: #000; font-weight: bold; }
.props input { appearance: none; display: block; position: relative; width: 11px; height: 11px; margin: 0; border-radius: 2px; background: #0a5db0; }
.props input::after { content: ""; position: absolute; left: 3px; top: 3px; width: 5px; height: 3px; border: solid #fff; border-width: 0 0 1px 1px; transform: rotate(-45deg); }
.font-value { display: flex; align-items: center; gap: 5px; }
.font-value svg { width: 10px; height: 10px; }

.resources { flex: 1; margin-top: 4px; }
.res-tools { flex: none; display: flex; align-items: center; gap: 4px; height: 22px; padding-left: 3px; }
.res-tools svg { width: 15px; height: 15px; }
.res-tools .filter { width: 150px; margin-left: auto; }
.res-views { flex: 1; display: flex; gap: 4px; min-height: 0; }
.res-views > div { border: 1px solid #999; background: #fff; }
.res-tree { width: 169px; padding: 0 19px; }
.res-files { flex: 1; }
.res-views .res-files { border-right: 0; }
.tabs { flex: none; display: flex; height: 16px; padding-left: 1px; font-size: 9px; }
.tabs button { padding: 0 6px; color: #111; border: 1px solid #e6e6e6; border-top: 0; }
.tabs .current { background: #f9f9f9; border-color: #f9f9f9; }
```
